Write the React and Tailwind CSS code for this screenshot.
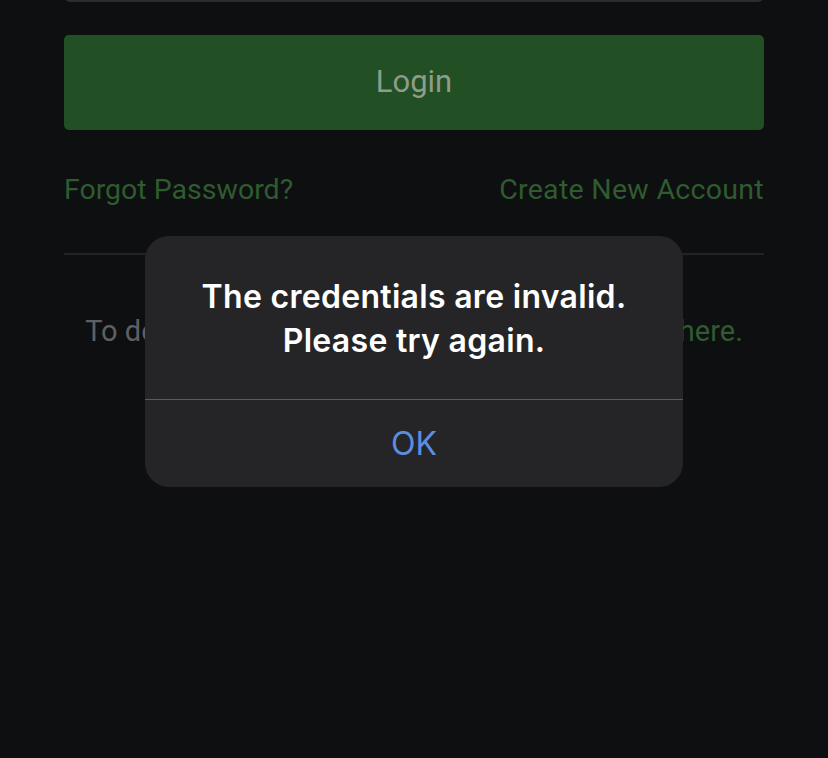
import React from "react";

const App = () => {
  return (
    <div className="relative w-[828px] h-[758px] overflow-hidden bg-[#0e0f11]" style={{ fontFamily: "Roboto, 'Liberation Sans', sans-serif" }}>
      <div className="px-[64px] flex flex-col">
        {/* input bottom edge */}
        <div className="-mt-[48px] h-[50px] rounded-[6px] border-2 border-[#2b2c30] bg-[#0e0f11]" />

        <button className="mt-[33px] h-[95px] w-full rounded-[5px] bg-[#234f24] text-[31px] text-[#8c9d8a]">
          Login
        </button>

        <div className="mt-[42px] flex justify-between text-[28.5px] leading-[36px] text-[#2f5b2f]">
          <span>Forgot Password?</span>
          <span className="tracking-[0.3px]">Create New Account</span>
        </div>

        <div className="mt-[45px] h-[2px] bg-[#222326]" />

        <p className="mt-[58px] text-center text-[29px] leading-[36px] text-[#5f6063]">
          To delete your account and personal data, tap <span className="text-[#2f5b2f]">here.</span>
        </p>
      </div>

      {/* alert */}
      <div className="absolute left-[145px] top-[236px] w-[538px] h-[251px] rounded-[24px] bg-[#252527] flex flex-col" style={{ fontFamily: "Inter, 'Noto Sans', sans-serif" }}>
        <div className="h-[163px] flex flex-col items-center justify-center pt-[2px] text-white font-semibold text-[32px] leading-[44px] tracking-[0.3px]">
          <span>The credentials are invalid.</span>
          <span>Please try again.</span>
        </div>
        <div className="h-px bg-[#5c5c5e]" />
        <div className="flex-1 flex items-center justify-center text-[32px] text-[#5b8ee0]">
          OK
        </div>
      </div>
    </div>
  );
};

export default App;
